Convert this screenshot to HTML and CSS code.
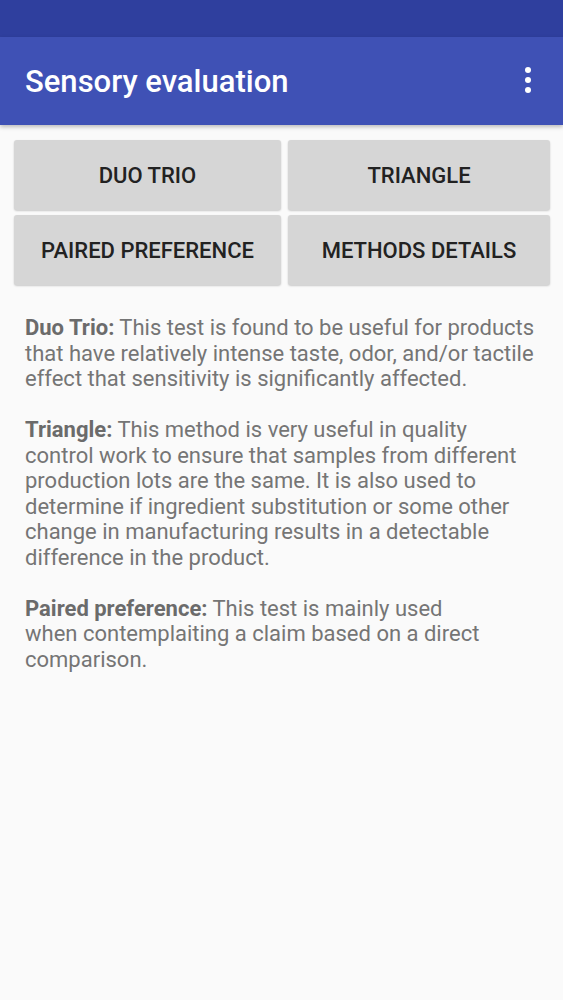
FILE: index.html
```html
<!DOCTYPE html>
<html lang="en">
<head>
    <meta charset="UTF-8">
    <meta name="viewport" content="width=device-width, initial-scale=1.0">
    <title>Sensory evaluation</title>
    <link rel="stylesheet" href="styles.css">
</head>
<body>
    <div class="status-bar"></div>
    <div class="app-bar">
        <div class="app-title">Sensory evaluation</div>
        <div class="menu">
            <svg width="10" height="28" viewBox="0 0 10 28">
                <circle cx="5" cy="4" r="3" fill="#fff"/>
                <circle cx="5" cy="14" r="3" fill="#fff"/>
                <circle cx="5" cy="24" r="3" fill="#fff"/>
            </svg>
        </div>
    </div>

    <div class="buttons">
        <button class="button">DUO TRIO</button>
        <button class="button">TRIANGLE</button>
        <button class="button">PAIRED PREFERENCE</button>
        <button class="button">METHODS DETAILS</button>
    </div>

    <div class="details">
        <p><b>Duo Trio:</b> This test is found to be useful for products<br>that have relatively intense taste, odor, and/or tactile<br>effect that sensitivity is significantly affected.</p>
        <p><b>Triangle:</b> This method is very useful in quality<br>control work to ensure that samples from different<br>production lots are the same. It is also used to<br>determine if ingredient substitution or some other<br>change in manufacturing results in a detectable<br>difference in the product.</p>
        <p><b>Paired preference:</b> This test is mainly used<br>when contemplaiting a claim based on a direct<br>comparison.</p>
    </div>
</body>
</html>
```

FILE: styles.css
```css
body {
    font-family: Roboto, "Noto Sans", sans-serif;
    margin: 0;
    padding: 0;
    background-color: #fafafa;
    width: 563px;
    height: 1000px;
    overflow: hidden;
}
.status-bar {
    height: 37px;
    background-color: #2f3f9e;
}
.app-bar {
    height: 88px;
    background-color: #3f51b5;
    display: flex;
    align-items: center;
    justify-content: space-between;
    padding: 0 25px;
    box-shadow: 0 2px 4px rgba(0, 0, 0, 0.25);
    position: relative;
}
.app-title {
    color: #fff;
    font-size: 31px;
    font-weight: 500;
}
.menu {
    display: flex;
    margin-right: 5px;
    margin-top: -2px;
}
.buttons {
    display: grid;
    grid-template-columns: 267px 262px;
    column-gap: 7px;
    row-gap: 5px;
    padding: 15px 0 0 14px;
}
.button {
    height: 70px;
    border: none;
    border-radius: 3px;
    background-color: #d6d6d6;
    box-shadow: 0 1px 2px rgba(0, 0, 0, 0.2);
    font-family: Roboto, "Noto Sans", sans-serif;
    font-size: 22px;
    font-weight: 500;
    color: #222;
    padding: 0;
}
.details {
    padding: 30px 25px 0 25px;
    color: #757575;
    font-size: 22px;
    line-height: 25.5px;
}
.details p {
    margin: 0 0 25.5px 0;
}
.details b {
    color: #6b6b6b;
    font-weight: 700;
}
```
